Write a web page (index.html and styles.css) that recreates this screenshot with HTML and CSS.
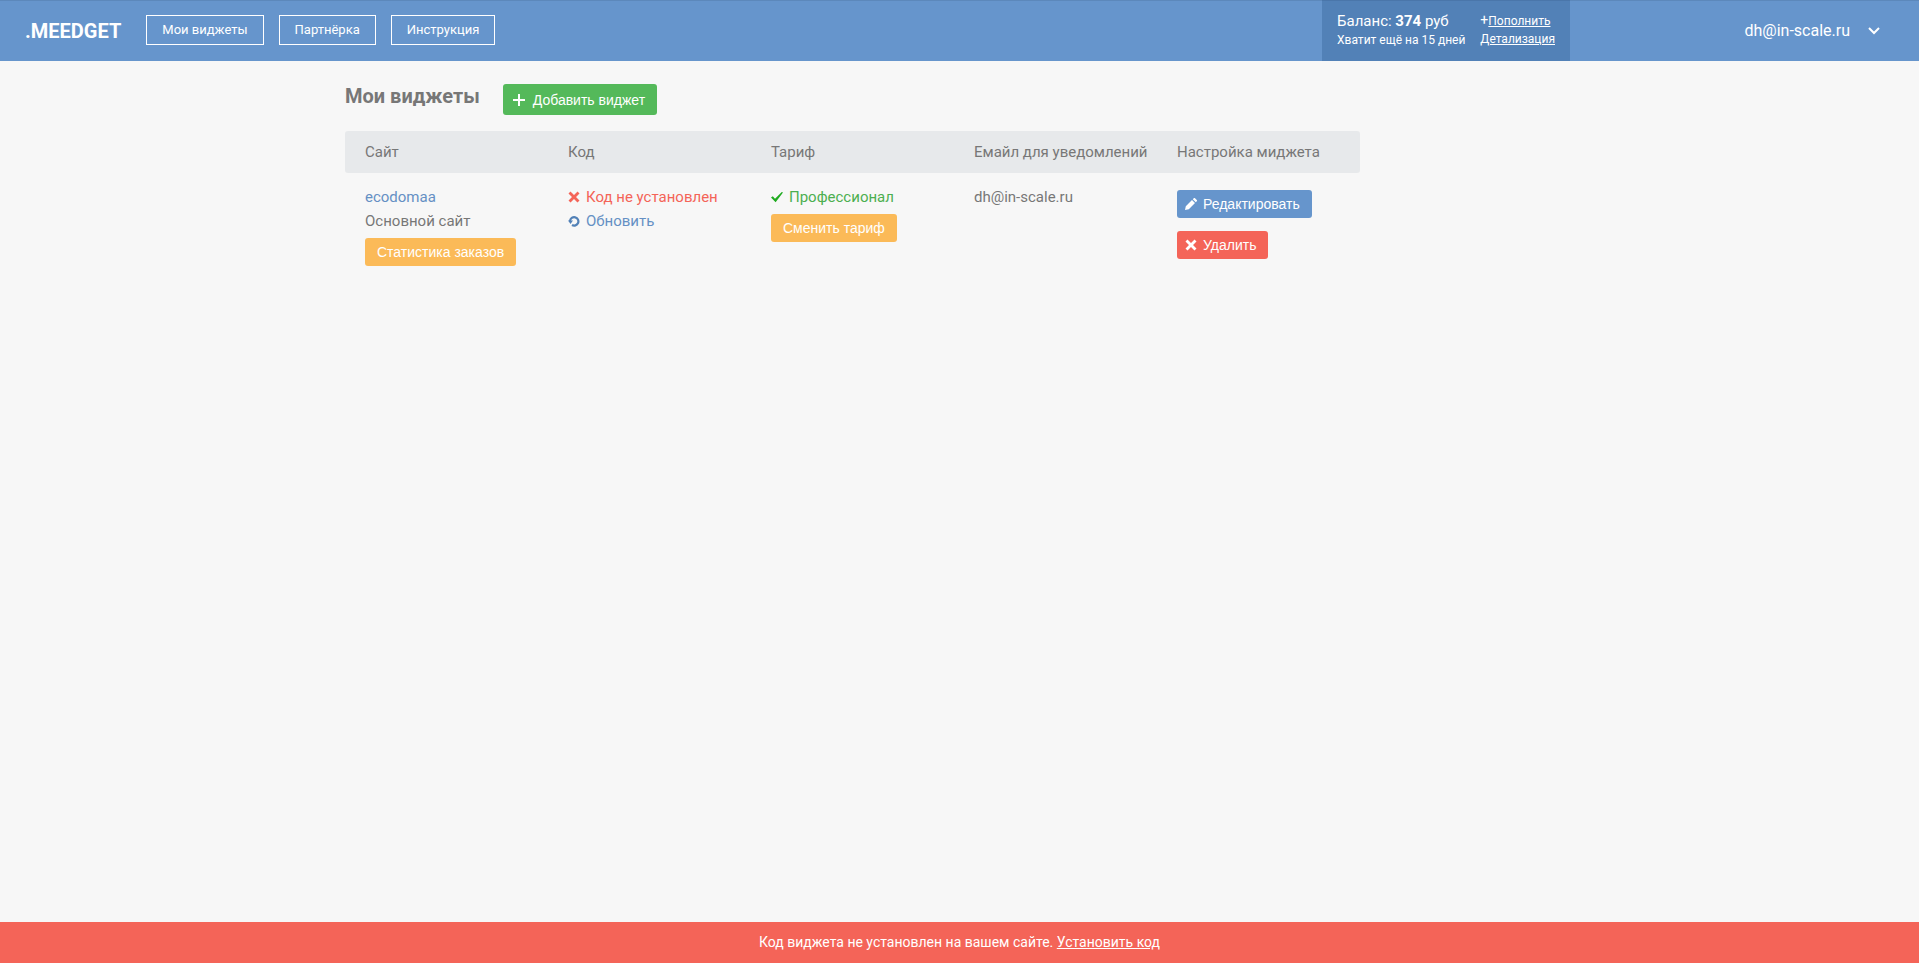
FILE: index.html
```
<!DOCTYPE html>
<html lang="ru">
<head>
    <meta charset="utf-8">
    <meta name="viewport" content="width=device-width, initial-scale=1.0">
    <title>Meedget - Мои виджеты</title>
    <link rel="stylesheet" href="styles.css">
</head>
<body>
    <header class="header">
        <a class="logo" href="#">.MEEDGET</a>
        <nav class="menu">
            <a href="#">Мои виджеты</a>
            <a href="#">Партнёрка</a>
            <a href="#">Инструкция</a>
        </nav>
        <div class="balance">
            <div class="balance-info">
                <div class="balance-sum">Баланс: <b>374</b> руб</div>
                <div>Хватит ещё на 15 дней</div>
            </div>
            <div class="balance-links">
                <div><span class="plus">+</span><a href="#">Пополнить</a></div>
                <div><a href="#">Детализация</a></div>
            </div>
        </div>
        <button class="user" type="button">
            dh@in-scale.ru
            <svg width="12" height="8" viewBox="0 0 12 8"><path d="M1 1l5 5 5-5" fill="none" stroke="#fff" stroke-width="2"/></svg>
        </button>
    </header>

    <main class="content">
        <div class="title">
            <h1>Мои виджеты</h1>
            <button class="btn btn-green" type="button">
                <svg width="12" height="12" viewBox="0 0 12 12"><path d="M5 0h2v5h5v2H7v5H5V7H0V5h5z" fill="#fff"/></svg>
                Добавить виджет
            </button>
        </div>

        <table class="widgets">
            <thead>
                <tr>
                    <th>Сайт</th>
                    <th>Код</th>
                    <th>Тариф</th>
                    <th>Емайл для уведомлений</th>
                    <th>Настройка миджета</th>
                </tr>
            </thead>
            <tbody>
                <tr>
                    <td>
                        <a class="blue" href="#">ecodomaa</a>
                        <div>Основной сайт</div>
                        <button class="btn btn-orange" type="button">Статистика заказов</button>
                    </td>
                    <td>
                        <div class="status red">
                            <svg width="12" height="12" viewBox="0 0 12 12"><path d="M2.500 0.500L6 4l3.500-3.500 2 2L8 6l3.500 3.500-2 2L6 8l-3.500 3.500-2-2L4 6 0.500 2.500z" fill="#f46458"/></svg>
                            Код не установлен
                        </div>
                        <a class="status blue" href="#">
                            <svg width="12" height="12" viewBox="0 0 12 12"><path d="M2 6.500V6a4.200 4.200 0 1 1 2 4" fill="none" stroke="#5281b7" stroke-width="2.200"/><path d="M0 5.500h5L2.500 9z" fill="#5281b7"/></svg>
                            Обновить
                        </a>
                    </td>
                    <td>
                        <div class="status green">
                            <svg width="12" height="12" viewBox="0 0 12 12"><path d="M0 6.500l1.800-1.300L4 7.800 10.800 1l1.200.4L4.600 11.300z" fill="#1fab1f"/></svg>
                            Профессионал
                        </div>
                        <button class="btn btn-orange" type="button">Сменить тариф</button>
                    </td>
                    <td>dh@in-scale.ru</td>
                    <td class="actions">
                        <button class="btn btn-blue" type="button">
                            <svg width="12" height="12" viewBox="0 0 12 12"><path d="M0 12l.8-3.800L7 2l3 3-6.200 6.200zM7.800 1.200L9 0h.8L12 2.200V3l-1.200 1.200z" fill="#fff"/></svg>
                            Редактировать
                        </button>
                        <button class="btn btn-red" type="button">
                            <svg width="12" height="12" viewBox="0 0 12 12"><path d="M2.500 0.500L6 4l3.500-3.500 2 2L8 6l3.500 3.500-2 2L6 8l-3.500 3.500-2-2L4 6 0.500 2.500z" fill="#fff"/></svg>
                            Удалить
                        </button>
                    </td>
                </tr>
            </tbody>
        </table>
    </main>

    <footer class="notice">
        Код виджета не установлен на вашем сайте. <a href="#">Установить код</a>
    </footer>
</body>
</html>
```
FILE: styles.css
```
* {
    box-sizing: border-box;
}
body {
    margin: 0;
    min-height: 100vh;
    display: flex;
    flex-direction: column;
    font-family: Roboto, sans-serif;
    font-size: 15px;
    line-height: 24px;
    color: #777;
    background: #f7f7f7;
}
svg {
    flex: none;
}
button {
    border: none;
    cursor: pointer;
}

/* шапка */
.header {
    display: flex;
    align-items: center;
    height: 61px;
    padding: 0 39px 0 25px;
    color: #fff;
    background: #6695cc;
    box-shadow: inset 0 1px #5c88bb;
}
.header a {
    color: #fff;
}
.header .logo {
    margin-right: 25px;
    font-size: 20px;
    font-weight: bold;
    text-decoration: none;
}
.menu {
    display: flex;
    gap: 15px;
    margin-bottom: 1px;
}
.menu a {
    padding: 0 15px;
    border: 1px solid #fff;
    font-size: 13px;
    line-height: 28px;
    text-decoration: none;
}
.balance {
    display: flex;
    align-self: stretch;
    gap: 15px;
    margin-left: auto;
    padding: 11px 15px 0;
    font-size: 12px;
    line-height: 18px;
    background: #5281b7;
    box-shadow: inset 0 1px #4a76aa;
}
.balance-sum {
    font-size: 15px;
    line-height: 20px;
}
.plus {
    font-size: 14px;
}
.user {
    display: flex;
    align-items: center;
    justify-content: flex-end;
    gap: 18px;
    width: 310px;
    padding: 0;
    font-family: inherit;
    font-size: 16px;
    color: #fff;
    background: none;
}

/* список виджетов */
.content {
    flex: 1;
    width: 100%;
    max-width: 1229px;
    margin: 0 auto;
    padding-top: 23px;
}
.title {
    display: flex;
    align-items: flex-start;
    gap: 23px;
    margin-bottom: 16px;
}
h1 {
    margin: 0;
    font-size: 20px;
    line-height: 24px;
}
.btn {
    display: flex;
    align-items: center;
    gap: 6px;
    height: 28px;
    padding: 0 12px;
    border-radius: 3px;
    font-family: Arial, "Liberation Sans", sans-serif;
    font-size: 14px;
    color: #fff;
}
.btn-green {
    gap: 8px;
    height: 31px;
    padding: 0 12px 0 10px;
    background: #54b95a;
}
.btn-orange {
    margin-top: 5px;
    background: #fbba58;
}
.btn-blue {
    padding-left: 8px;
    background: #6695cc;
}
.btn-red {
    margin-top: 13px;
    padding-left: 8px;
    background: #f46458;
}
.widgets {
    width: 100%;
    max-width: 1015px;
    table-layout: fixed;
    border-collapse: separate;
    border-spacing: 0;
}
.widgets th {
    padding: 9px 0 9px 20px;
    font-weight: normal;
    text-align: left;
    white-space: nowrap;
    background: #e7e9eb;
}
.widgets th:first-child {
    border-radius: 3px 0 0 3px;
}
.widgets th:last-child {
    border-radius: 0 3px 3px 0;
}
.widgets td {
    padding: 12px 0 0 20px;
    vertical-align: top;
}
.widgets .actions {
    padding-top: 17px;
}
.widgets a {
    text-decoration: none;
}
.status {
    display: flex;
    align-items: center;
    gap: 6px;
}
.blue {
    color: #6590c4;
}
.red {
    color: #f46458;
}
.green {
    color: #4caf50;
}

/* полоса внизу */
.notice {
    padding: 8px 0 9px;
    font-size: 14px;
    text-align: center;
    color: #fff;
    background: #f46458;
}
.notice a {
    color: #fff;
}
```
